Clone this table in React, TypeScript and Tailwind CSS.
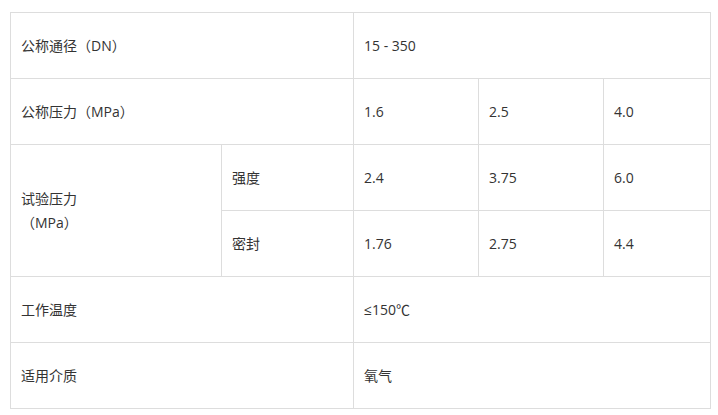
import React from "react";

const td = "border border-[#dddddd] px-[10px] align-middle";

export default function App() {
  return (
    <div className="w-[718px] h-[415px] bg-white pt-[12px] pl-[10px]" style={{ fontFamily: '"Open Sans", "Noto Sans CJK SC", sans-serif' }}>
      <table className="border-collapse table-fixed w-[700px] text-[14px] leading-[24px] text-[#333333]">
        <colgroup>
          <col className="w-[211px]" />
          <col className="w-[132px]" />
          <col className="w-[125px]" />
          <col className="w-[125px]" />
          <col className="w-[107px]" />
        </colgroup>
        <tbody>
          <tr className="h-[66px]">
            <td className={td} colSpan={2}>公称通径（DN）</td>
            <td className={td} colSpan={3}>15 - 350</td>
          </tr>
          <tr className="h-[66px]">
            <td className={td} colSpan={2}>公称压力（MPa）</td>
            <td className={td}>1.6</td>
            <td className={td}>2.5</td>
            <td className={td}>4.0</td>
          </tr>
          <tr className="h-[66px]">
            <td className={td} rowSpan={2}>试验压力<br />（MPa）</td>
            <td className={td}>强度</td>
            <td className={td}>2.4</td>
            <td className={td}>3.75</td>
            <td className={td}>6.0</td>
          </tr>
          <tr className="h-[66px]">
            <td className={td}>密封</td>
            <td className={td}>1.76</td>
            <td className={td}>2.75</td>
            <td className={td}>4.4</td>
          </tr>
          <tr className="h-[66px]">
            <td className={td} colSpan={2}>工作温度</td>
            <td className={td} colSpan={3}>≤150℃</td>
          </tr>
          <tr className="h-[66px]">
            <td className={td} colSpan={2}>适用介质</td>
            <td className={td} colSpan={3}>氧气</td>
          </tr>
        </tbody>
      </table>
    </div>
  );
}
